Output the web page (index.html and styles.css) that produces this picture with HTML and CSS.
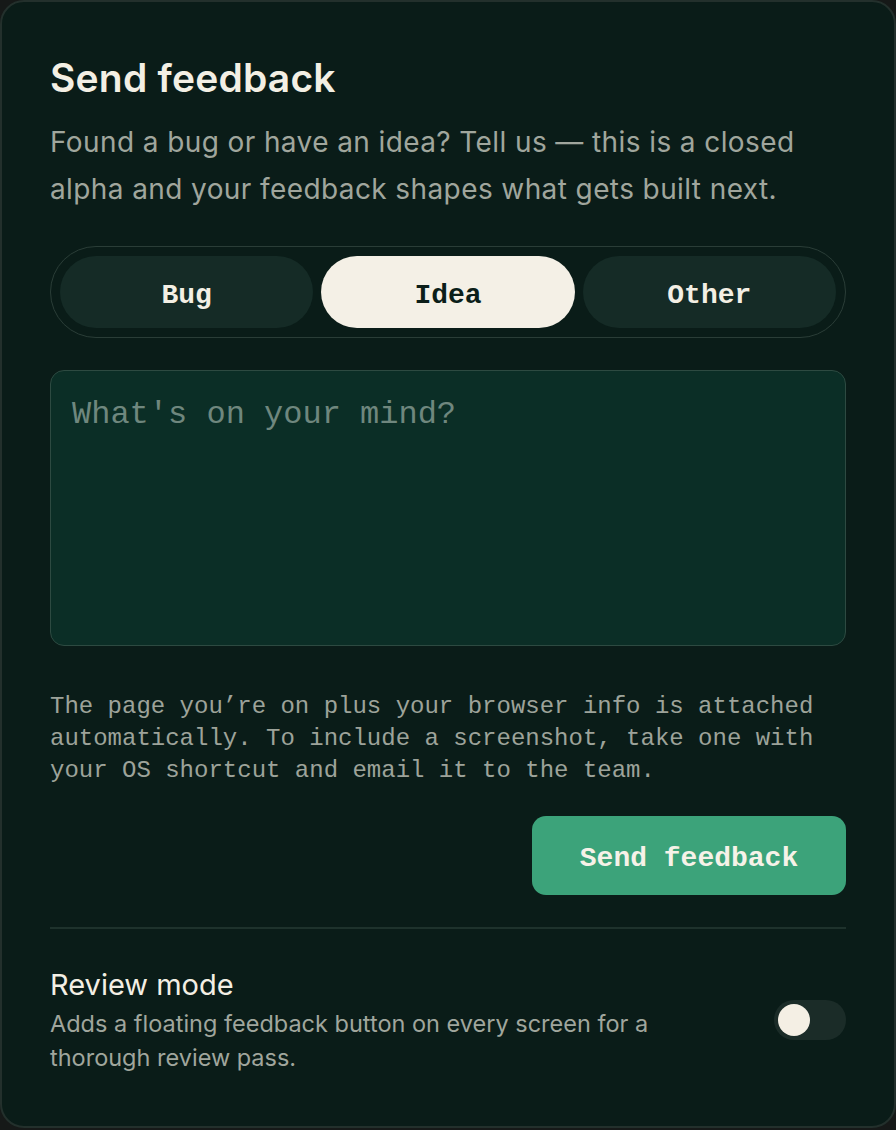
FILE: index.html
```html
<!DOCTYPE html>
<html lang="en">
<head>
<meta charset="utf-8">
<title>Send feedback</title>
<link rel="stylesheet" href="styles.css">
</head>
<body>
<main class="card">
  <h1 class="title">Send feedback</h1>
  <p class="intro">Found a bug or have an idea? Tell us — this is a closed alpha and your feedback shapes what gets built next.</p>

  <div class="segment" role="tablist">
    <button class="seg-btn" type="button">Bug</button>
    <button class="seg-btn is-active" type="button">Idea</button>
    <button class="seg-btn" type="button">Other</button>
  </div>

  <textarea class="message" placeholder="What's on your mind?"></textarea>

  <p class="hint">The page you’re on plus your browser info is attached automatically. To include a screenshot, take one with your OS shortcut and email it to the team.</p>

  <div class="actions">
    <button class="send" type="button">Send feedback</button>
  </div>

  <hr class="divider">

  <div class="review">
    <div class="review-text">
      <div class="review-title">Review mode</div>
      <div class="review-desc">Adds a floating feedback button on every screen for a thorough review pass.</div>
    </div>
    <span class="toggle"><span class="knob"></span></span>
  </div>
</main>
</body>
</html>
```

FILE: styles.css
```css
html, body {
  margin: 0;
  padding: 0;
  background: #161918;
}

.card {
  box-sizing: border-box;
  width: 896px;
  height: 1128px;
  background: #0a1c18;
  border: 2px solid #23302c;
  border-radius: 24px;
  padding: 48px 48px 0;
  font-family: Inter, "Noto Sans", sans-serif;
  color: #f3efe4;
}

.title {
  margin: 0;
  font-size: 39px;
  line-height: 56px;
  font-weight: 600;
  letter-spacing: 0.2px;
}

.intro {
  margin: 13px 0 0;
  font-size: 28px;
  line-height: 47px;
  letter-spacing: 0.4px;
  color: #a0a69d;
}

.segment {
  margin-top: 33px;
  display: grid;
  grid-template-columns: repeat(3, 1fr);
  gap: 8px;
  padding: 9px;
  border: 1px solid #2a3d37;
  border-radius: 46px;
}

.seg-btn {
  height: 72px;
  border: 0;
  border-radius: 36px;
  background: #152b26;
  color: #f3efe4;
  font-family: "Liberation Mono", "Courier New", monospace;
  font-weight: 700;
  font-size: 28px;
  padding-top: 7px;
}

.seg-btn.is-active {
  background: #f4f0e6;
  color: #0b1e19;
}

.message {
  display: block;
  box-sizing: border-box;
  width: 100%;
  height: 276px;
  margin-top: 32px;
  padding: 22px 21px;
  background: #0b2e26;
  border: 1px solid #2d4a41;
  border-radius: 14px;
  resize: none;
  font-family: "Liberation Mono", "Courier New", monospace;
  font-size: 32px;
  line-height: 44px;
  color: #f3efe4;
  outline: none;
}

.message::placeholder {
  color: #6f877e;
}

.hint {
  margin: 45px 0 0;
  font-family: "Liberation Mono", "Courier New", monospace;
  font-size: 24px;
  line-height: 32px;
  color: #9da39a;
}

.actions {
  display: flex;
  justify-content: flex-end;
  margin-top: 29px;
}

.send {
  width: 314px;
  height: 79px;
  border: 0;
  border-radius: 14px;
  background: #3ca37a;
  color: #f6f2e8;
  font-family: "Liberation Mono", "Courier New", monospace;
  font-weight: 700;
  font-size: 28px;
  padding-top: 6px;
}

.divider {
  margin: 32px 0 0;
  border: 0;
  border-top: 2px solid #1e322c;
}

.review {
  display: flex;
  align-items: center;
  justify-content: space-between;
  margin-top: 36px;
}

.review-title {
  font-size: 29px;
  line-height: 40px;
  color: #f3efe4;
}

.review-desc {
  margin-top: 2px;
  font-size: 23.5px;
  line-height: 34px;
  color: #a0a69d;
  width: 640px;
}

.toggle {
  display: flex;
  align-items: center;
  width: 72px;
  height: 40px;
  box-sizing: border-box;
  padding: 0 4px;
  border-radius: 20px;
  background: #1b2c28;
}

.knob {
  width: 32px;
  height: 32px;
  border-radius: 50%;
  background: #f4efe4;
}
```
